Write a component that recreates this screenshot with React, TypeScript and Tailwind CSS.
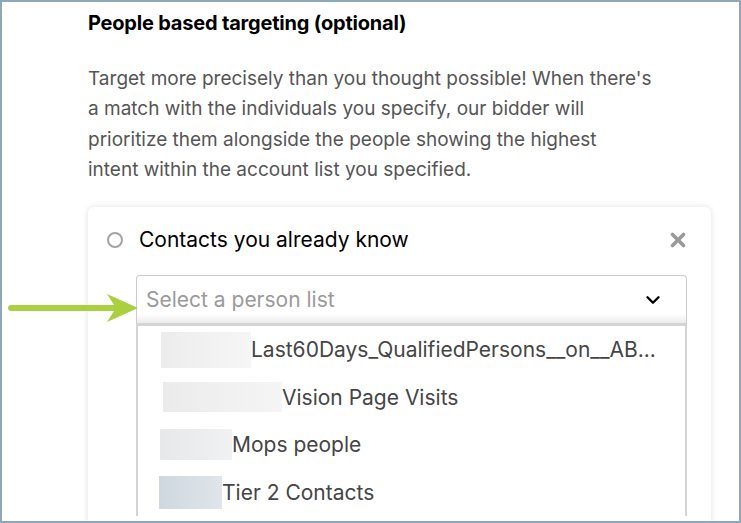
import { ChevronDown, X } from "lucide-react";

const lists = [
  { name: "Last60Days_QualifiedPersons__on__AB...", w: "w-[90px]", h: "h-[36px]", bg: "from-[#ececec] to-[#f6f6f6]", ml: "ml-[23px]" },
  { name: "Vision Page Visits", w: "w-[119px]", h: "h-[30px]", bg: "from-[#ebebeb] to-[#f5f5f5]", ml: "ml-[25px]" },
  { name: "Mops people", w: "w-[72px]", h: "h-[31px]", bg: "from-[#e6e8ea] to-[#f0f1f2]", ml: "ml-[22px]" },
  { name: "Tier 2 Contacts", w: "w-[63px]", h: "h-[33px]", bg: "from-[#cfd8df] to-[#dfe5ea]", ml: "ml-[21px]" },
];

export default function App() {
  return (
    <div
      className="relative h-[523px] w-[741px] overflow-hidden border-2 border-[#8fa7b8] bg-white"
      style={{ fontFamily: "Inter, 'Liberation Sans', sans-serif" }}
    >
      <div className="pl-[86px] pr-[28px] pt-[8px]">
        <h2 className="text-[20px] font-bold leading-[26px] tracking-[-0.2px] text-black">People based targeting (optional)</h2>
        <p className="mt-[28px] max-w-[572px] text-[19px] leading-[30.3px] text-[#555]">
          Target more precisely than you thought possible! When there's a match with the individuals you specify, our bidder will prioritize them alongside the people showing the highest
          <br />
          intent within the account list you specified.
        </p>

        {/* Card */}
        <div className="mt-[22px] h-[400px] rounded-[6px] bg-white shadow-[0_0_6px_rgba(0,0,0,0.12)]">
          <div className="flex items-center pl-[19px] pr-[22px] pt-[20px]">
            <span className="h-[16px] w-[16px] rounded-full border-2 border-[#a3a3a3]" />
            <span className="ml-[16px] text-[21px] leading-[26px] text-black">Contacts you already know</span>
            <X className="ml-auto text-[#9a9a9a]" size={22} strokeWidth={4} />
          </div>

          <div className="ml-[48px] mr-[24px] mt-[22px]">
            <div className="flex h-[48px] items-center rounded-t-[4px] border border-b-0 border-[#cccccc] bg-gradient-to-b from-white from-80% to-[#ececec] pl-[9px] pr-[22px]">
              <span className="text-[21px] text-[#9a9a9a]">Select a person list</span>
              <ChevronDown className="ml-auto text-black" size={22} strokeWidth={2.6} />
            </div>
            <div className="h-[3px] bg-[#d4d4d4]" />
            <div className="border-x-2 border-[#d4d4d4]">
              {lists.map((l) => (
                <div key={l.name} className="flex h-[47.5px] items-center">
                  <span className={`${l.ml} ${l.w} ${l.h} bg-gradient-to-r ${l.bg}`} />
                  <span className="text-[21px] text-[#454545]">{l.name}</span>
                </div>
              ))}
            </div>
          </div>
        </div>
      </div>

      {/* Pointer arrow */}
      <svg className="absolute left-[5px] top-[290px]" width="132" height="32" viewBox="0 0 132 32">
        <line x1="4" y1="16" x2="112" y2="16" stroke="#a9d03f" strokeWidth="6" strokeLinecap="round" />
        <polygon points="100,2 131,16 100,30 109,16" fill="#a9d03f" />
      </svg>
    </div>
  );
}
